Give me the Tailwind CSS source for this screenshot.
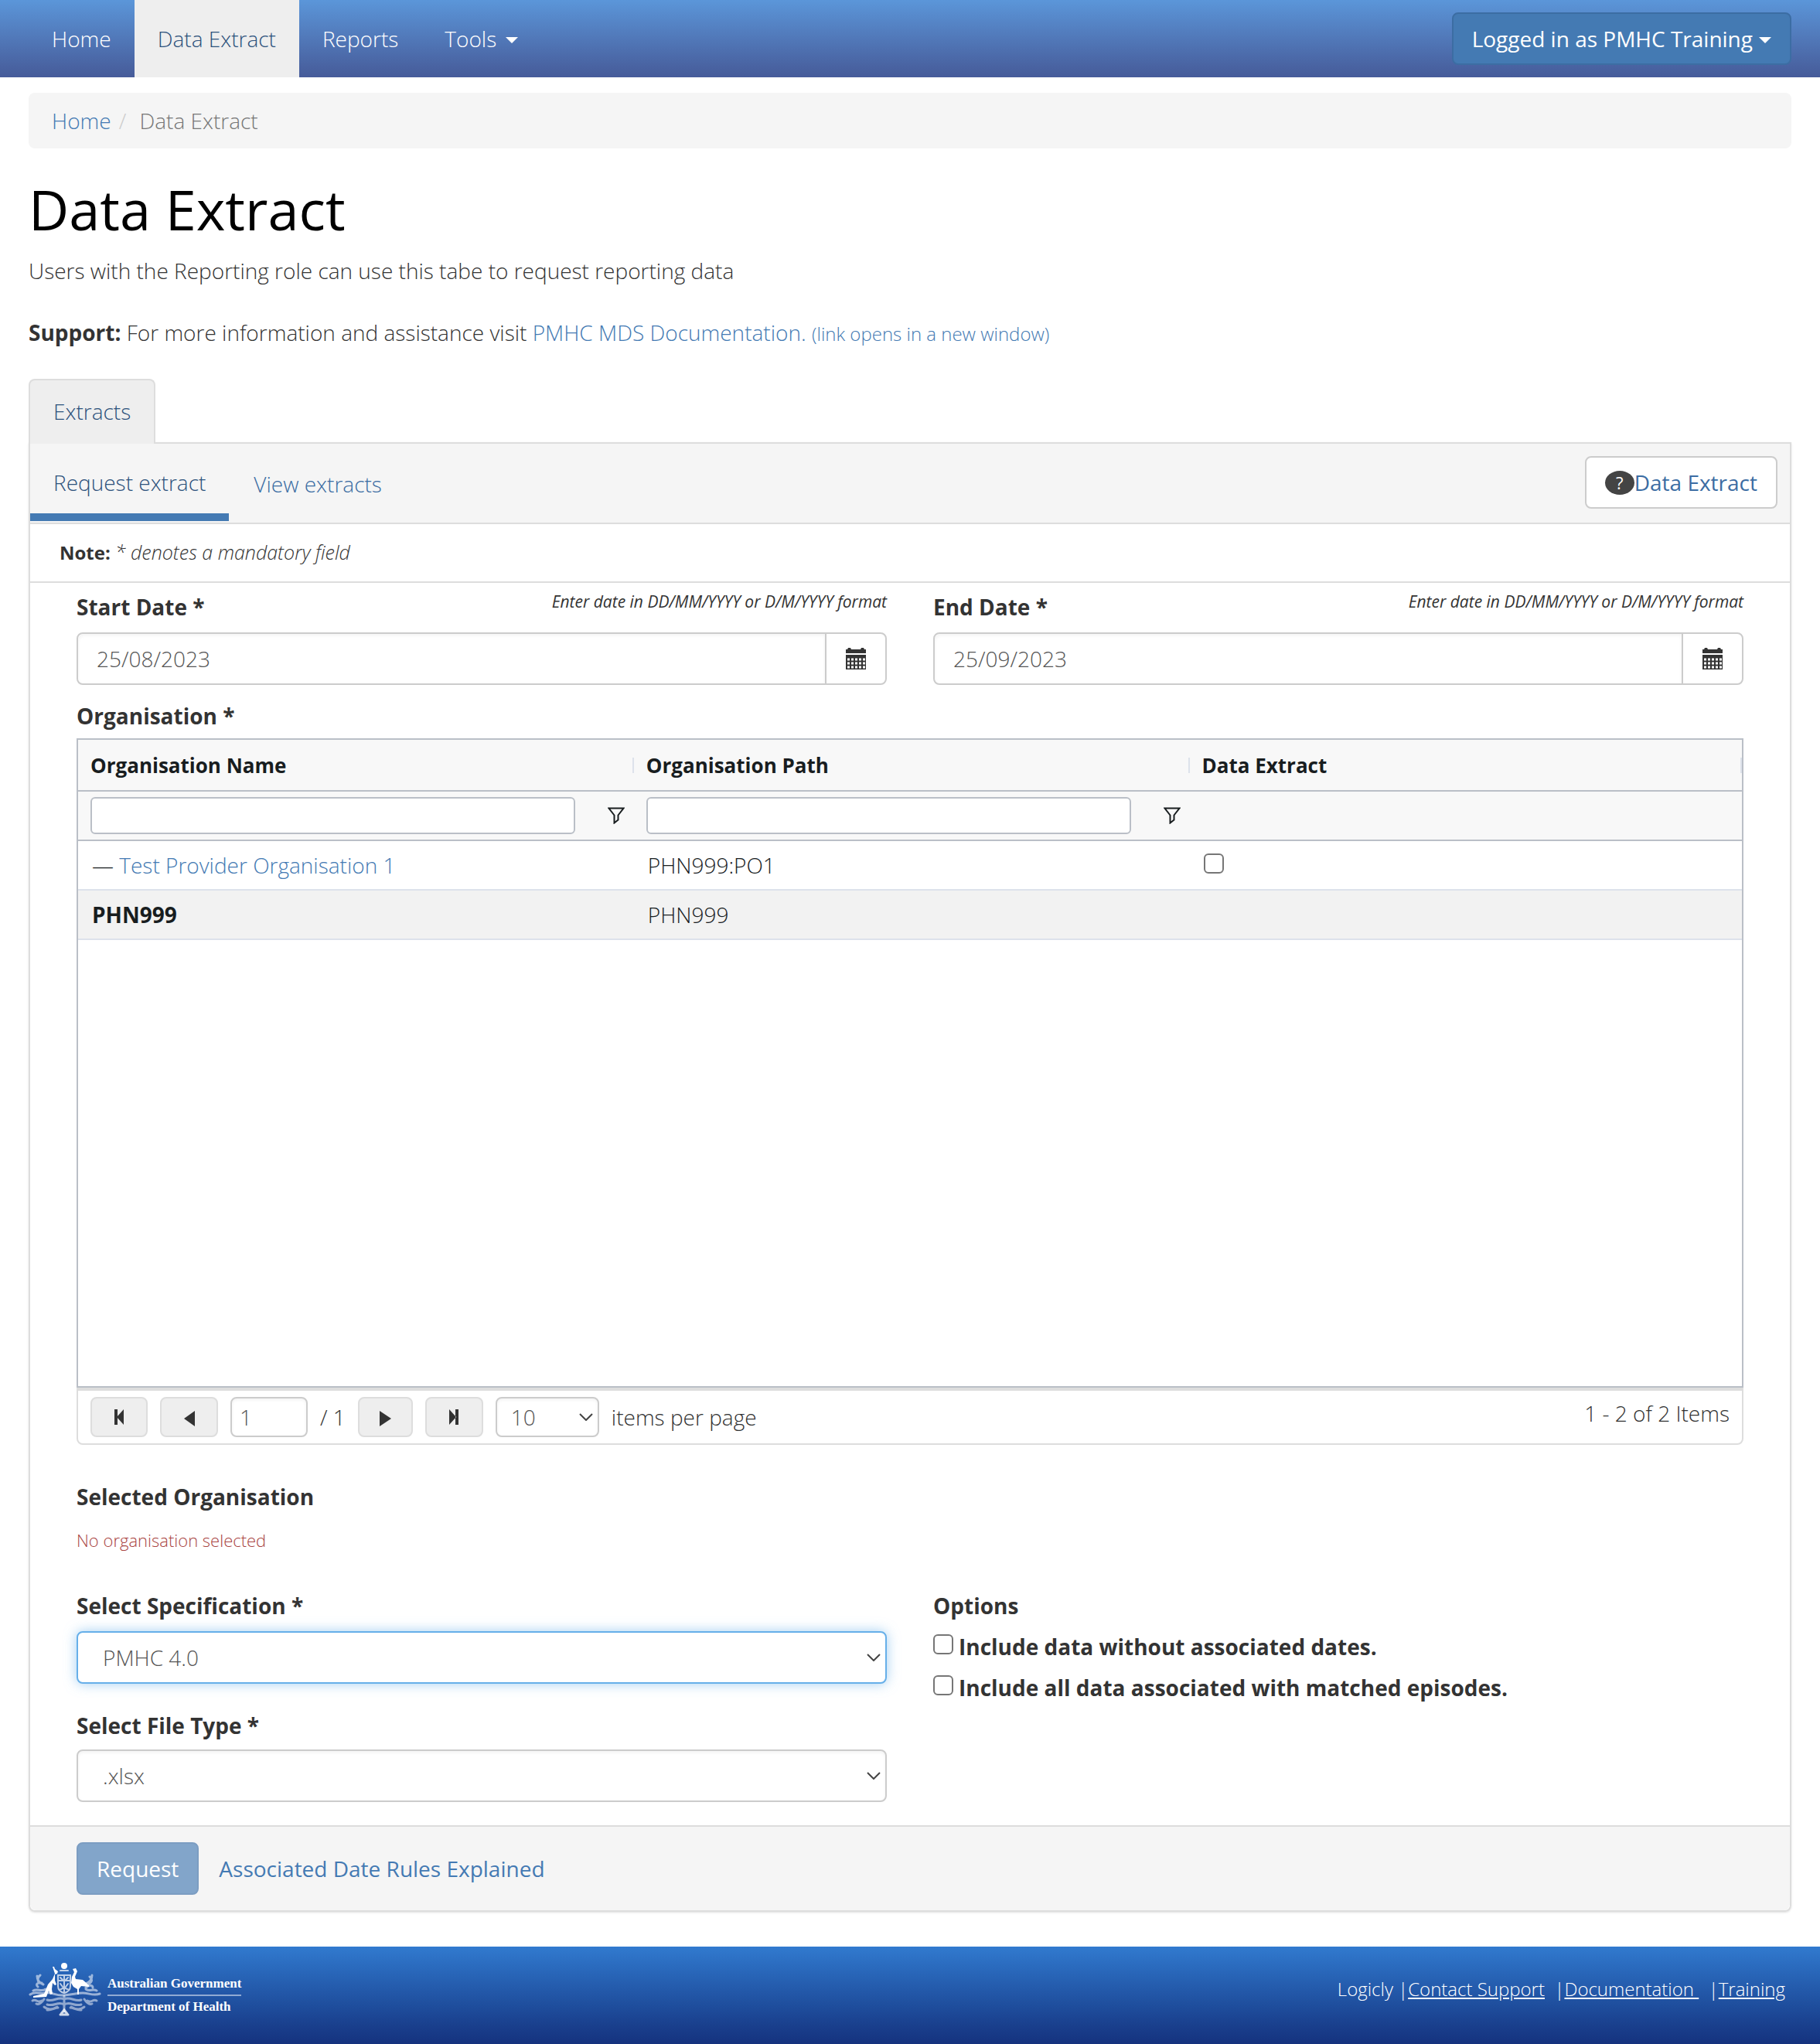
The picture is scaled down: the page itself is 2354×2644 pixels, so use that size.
<!DOCTYPE html>
<html lang="en">
<head>
    <meta charset="UTF-8">
    <meta name="viewport" content="width=device-width, initial-scale=1.0">
    <title>Data Extract - PMHC MDS</title>
    <script src="https://cdn.jsdelivr.net/npm/@tailwindcss/browser@4"></script>
</head>
<body class="bg-white text-[#333] font-['Open_Sans',sans-serif] font-light text-[28px] leading-[40px]">

    <!-- Navigation -->
    <header class="bg-linear-to-b from-[#5b96d9] to-[#465b99] px-[37px] h-[100px] flex items-center justify-between text-white">
        <nav class="h-full">
            <ul class="flex h-full">
                <li><a href="#" class="flex h-full items-center px-[30px]">Home</a></li>
                <li><a href="#" class="flex h-full items-center px-[30px] bg-[#eee] text-[#2d527c]">Data Extract</a></li>
                <li><a href="#" class="flex h-full items-center px-[30px]">Reports</a></li>
                <li><a href="#" class="flex h-full items-center gap-3 px-[30px]">Tools
                    <svg class="w-4 h-2 mt-1" viewBox="0 0 16 8" fill="currentColor"><path d="M0 0h16l-8 8z"/></svg></a></li>
            </ul>
        </nav>
        <button type="button" class="flex items-center gap-2 h-[68px] px-[24px] border-2 border-[#3c6da3] bg-[#447ab3] rounded-lg font-normal">Logged in as PMHC Training
            <svg class="w-4 h-2 mt-1" viewBox="0 0 16 8" fill="currentColor"><path d="M0 0h16l-8 8z"/></svg></button>
    </header>

    <main class="px-[37px] pt-5">
        <!-- Breadcrumb -->
        <ol class="flex bg-[#f5f5f5] rounded-lg px-[30px] py-4 text-[#777]">
            <li><a href="#" class="text-[#447ab3]">Home</a></li>
            <li><span class="text-[#ccc] px-[10px]">/</span> Data Extract</li>
        </ol>

        <h1 class="text-[72px] leading-[80px] font-normal text-black mt-[38px]">Data Extract</h1>
        <p class="mt-5">Users with the Reporting role can use this tabe to request reporting data</p>
        <p class="mt-10"><b class="font-bold">Support:</b> For more information and assistance visit <a href="#" class="text-[#447ab3]">PMHC MDS Documentation. <small class="text-[24px]">(link opens in a new window)</small></a></p>

        <!-- Main tabs -->
        <ul class="flex mt-[38px]">
            <li class="-mb-0.5"><a href="#" class="block h-[84px] px-[30px] pt-5 bg-[#eee] text-[#2d527c] border-2 border-b-0 border-[#ddd] rounded-t-lg">Extracts</a></li>
        </ul>

        <div class="border-2 border-[#ddd] rounded-b-lg shadow-sm">
            <!-- Sub tabs -->
            <div class="flex justify-between bg-[#f5f5f5] border-b-2 border-[#ddd] h-[104px]">
                <ul class="flex gap-0.5">
                    <li><a href="#" class="block h-[100px] px-[30px] pt-[30px] text-[#2d527c] border-b-10 border-[#447ab3]">Request extract</a></li>
                    <li><a href="#" class="block h-[100px] px-[30px] pt-8 text-[#3c6da3]">View extracts</a></li>
                </ul>
                <button type="button" class="flex items-center h-[68px] mt-4 mr-4 px-[24px] bg-white border-2 border-[#ccc] rounded-lg font-normal text-[#3c6da3]">
                    <span class="w-[38px] h-[31px] rounded-[50%] bg-[#444] text-white text-[22px] leading-[31px] text-center">?</span>Data Extract</button>
            </div>
            <p class="border-b-2 border-[#ddd] h-[76px] pl-[38px] text-[24px] leading-[72px]"><b class="font-bold">Note:</b> <i class="text-[25px]">* denotes a mandatory field</i></p>

            <form>
                <div class="px-[60px] pb-[30px]">
                    <div class="grid grid-cols-2 gap-[60px]">
                        <div>
                            <div class="flex justify-between h-16">
                                <label for="startDate" class="font-bold pt-[11px]">Start Date *</label>
                                <i class="font-normal text-[21px] leading-[48px]">Enter date in DD/MM/YYYY or D/M/YYYY format</i>
                            </div>
                            <div class="flex h-[68px] border-2 border-[#ccc] rounded-lg">
                                <input type="text" id="startDate" value="25/08/2023" class="flex-1 min-w-0 px-6 text-[#555] rounded-l-lg inset-shadow-sm">
                                <button type="button" aria-label="Choose start date" class="w-[78px] border-l-2 border-[#ccc] flex justify-center items-center">
                                    <svg class="w-[26px] h-7" viewBox="0 0 26 28"><path fill="#333" d="M0 2h2l1-2h3l1 2h12l1-2h3l1 2h2v5H0zM0 9h26v19H0z"/><path stroke="#fff" stroke-width="3" stroke-dasharray="3 2" d="M2 15h23M2 20h23M2 25h23"/></svg>
                                </button>
                            </div>
                        </div>
                        <div>
                            <div class="flex justify-between h-16">
                                <label for="endDate" class="font-bold pt-[11px]">End Date *</label>
                                <i class="font-normal text-[21px] leading-[48px]">Enter date in DD/MM/YYYY or D/M/YYYY format</i>
                            </div>
                            <div class="flex h-[68px] border-2 border-[#ccc] rounded-lg">
                                <input type="text" id="endDate" value="25/09/2023" class="flex-1 min-w-0 px-6 text-[#555] rounded-l-lg inset-shadow-sm">
                                <button type="button" aria-label="Choose end date" class="w-[78px] border-l-2 border-[#ccc] flex justify-center items-center">
                                    <svg class="w-[26px] h-7" viewBox="0 0 26 28"><path fill="#333" d="M0 2h2l1-2h3l1 2h12l1-2h3l1 2h2v5H0zM0 9h26v19H0z"/><path stroke="#fff" stroke-width="3" stroke-dasharray="3 2" d="M2 15h23M2 20h23M2 25h23"/></svg>
                                </button>
                            </div>
                        </div>
                    </div>

                    <!-- Organisation grid -->
                    <h2 class="font-bold mt-5 mb-[9px]">Organisation *</h2>
                    <div class="border-2 border-[#babfc7] h-[840px]">
                        <table class="w-full table-fixed text-left text-[#181d1f]">
                            <thead class="bg-[#f8f8f8]">
                                <tr class="h-[66px] border-b-2 border-[#babfc7] text-[26px]">
                                    <th class="p-0 w-[33.4%]"><div class="flex items-center justify-between pl-4 font-bold">Organisation Name<span class="w-0.5 h-5 bg-[#dde2eb]"></span></div></th>
                                    <th class="p-0 w-[33.4%]"><div class="flex items-center justify-between pl-4 font-bold">Organisation Path<span class="w-0.5 h-5 bg-[#dde2eb]"></span></div></th>
                                    <th class="p-0"><div class="flex items-center justify-between pl-4 font-bold">Data Extract<span class="w-0.5 h-5 bg-[#dde2eb]"></span></div></th>
                                </tr>
                                <tr class="h-16 border-b-2 border-[#babfc7]">
                                    <td class="p-0"><div class="flex items-center pl-4 pr-3">
                                        <input type="text" aria-label="Filter by organisation name" class="flex-1 min-w-0 h-12 bg-white border-2 border-[#babfc7] rounded-md px-2">
                                        <button type="button" aria-label="Name filter" class="ml-[42px]"><svg class="w-[22px] h-[22px]" viewBox="0 0 22 22" fill="none" stroke="#181d1f" stroke-width="2"><path d="M1.500 1.500h19l-7 9v6l-5 4v-10z"/></svg></button>
                                    </div></td>
                                    <td class="p-0"><div class="flex items-center pl-4 pr-3">
                                        <input type="text" aria-label="Filter by organisation path" class="flex-1 min-w-0 h-12 bg-white border-2 border-[#babfc7] rounded-md px-2">
                                        <button type="button" aria-label="Path filter" class="ml-[42px]"><svg class="w-[22px] h-[22px]" viewBox="0 0 22 22" fill="none" stroke="#181d1f" stroke-width="2"><path d="M1.500 1.500h19l-7 9v6l-5 4v-10z"/></svg></button>
                                    </div></td>
                                    <td></td>
                                </tr>
                            </thead>
                            <tbody>
                                <tr class="h-16 border-b-2 border-[#dde2eb]">
                                    <td class="px-[18px]">— <a href="#" class="text-[#447ab3]">Test Provider Organisation 1</a></td>
                                    <td class="px-[18px]">PHN999:PO1</td>
                                    <td class="px-[18px]"><input type="checkbox" aria-label="Extract Test Provider Organisation 1" class="block mb-1 size-[26px] appearance-none bg-white border-2 border-[#767676] rounded-md"></td>
                                </tr>
                                <tr class="h-16 border-b-2 border-[#dde2eb] bg-[#f2f2f2]">
                                    <td class="px-[18px] font-bold">PHN999</td>
                                    <td class="px-[18px]">PHN999</td>
                                    <td></td>
                                </tr>
                            </tbody>
                        </table>
                    </div>

                    <!-- Pager -->
                    <div class="flex gap-4 border-2 border-t-4 border-[#ddd] rounded-b-lg px-4 py-2 h-[74px]">
                        <button type="button" aria-label="First page" class="w-[74px] h-[52px] bg-[#eee] border-2 border-[#ddd] rounded-lg flex justify-center items-center"><svg class="w-3 h-5" viewBox="0 0 12 20" fill="#333"><path d="M0 0h4v20H0zM12 0v20L3 10z"/></svg></button>
                        <button type="button" aria-label="Previous page" class="w-[75px] h-[52px] bg-[#eee] border-2 border-[#ddd] rounded-lg flex justify-center items-center"><svg class="w-[14px] h-5 mt-1" viewBox="0 0 14 20" fill="#333"><path d="M14 0v20L0 10z"/></svg></button>
                        <input type="text" aria-label="Page" value="1" class="w-[100px] h-[52px] px-[10px] border-2 border-[#ccc] rounded-lg text-[#555] inset-shadow-sm">
                        <span class="leading-[52px]">/ 1</span>
                        <button type="button" aria-label="Next page" class="w-[71px] h-[52px] bg-[#eee] border-2 border-[#ddd] rounded-lg flex justify-center items-center"><svg class="w-[15px] h-5 mt-1" viewBox="0 0 15 20" fill="#333"><path d="M0 0v20l15-10z"/></svg></button>
                        <button type="button" aria-label="Last page" class="w-[75px] h-[52px] bg-[#eee] border-2 border-[#ddd] rounded-lg flex justify-center items-center"><svg class="w-3 h-5" viewBox="0 0 12 20" fill="#333"><path d="M8 0h4v20H8zM0 0v20l9-10z"/></svg></button>
                        <div class="grid w-[134px] h-[52px]">
                            <select id="pageSize" class="col-start-1 row-start-1 appearance-none px-[18px] border-2 border-[#ccc] rounded-lg text-[#555] bg-white inset-shadow-sm"><option>10</option></select>
                            <svg class="col-start-1 row-start-1 justify-self-end self-center mr-2 w-[18px] h-[10px] pointer-events-none" viewBox="0 0 18 10" fill="none" stroke="#444" stroke-width="2"><path d="M1 1l8 8 8-8"/></svg>
                        </div>
                        <label for="pageSize" class="leading-[52px]">items per page</label>
                        <span class="ml-auto leading-[42px]">1 - 2 of 2 Items</span>
                    </div>

                    <h2 class="font-bold mt-[47px]">Selected Organisation</h2>
                    <p class="mt-4 text-[22px] text-[#a94442]">No organisation selected</p>

                    <!-- Specification and options -->
                    <div class="grid grid-cols-2 gap-[60px] mt-[45px]">
                        <div>
                            <label for="specification" class="block font-bold">Select Specification *</label>
                            <div class="grid h-[68px] mt-[13px]">
                                <select id="specification" class="col-start-1 row-start-1 appearance-none px-8 border-2 border-[#66afe9] rounded-lg text-[#555] bg-white shadow-[0_0_16px_#66afe999]"><option>PMHC 4.0</option></select>
                                <svg class="col-start-1 row-start-1 justify-self-end self-center mr-2 w-[18px] h-[10px] pointer-events-none" viewBox="0 0 18 10" fill="none" stroke="#444" stroke-width="2"><path d="M1 1l8 8 8-8"/></svg>
                            </div>
                            <label for="fileType" class="block font-bold mt-[34px]">Select File Type *</label>
                            <div class="grid h-[68px] mt-[11px]">
                                <select id="fileType" class="col-start-1 row-start-1 appearance-none px-8 border-2 border-[#ccc] rounded-lg text-[#555] bg-white inset-shadow-sm"><option>.xlsx</option></select>
                                <svg class="col-start-1 row-start-1 justify-self-end self-center mr-2 w-[18px] h-[10px] pointer-events-none" viewBox="0 0 18 10" fill="none" stroke="#444" stroke-width="2"><path d="M1 1l8 8 8-8"/></svg>
                            </div>
                        </div>
                        <fieldset class="font-bold">
                            <legend>Options</legend>
                            <label class="flex gap-[7px] mt-[13px]"><input type="checkbox" class="mt-1 size-[26px] appearance-none bg-white border-2 border-[#767676] rounded-md">Include data without associated dates.</label>
                            <label class="flex gap-[7px] mt-[13px]"><input type="checkbox" class="mt-1 size-[26px] appearance-none bg-white border-2 border-[#767676] rounded-md">Include all data associated with matched episodes.</label>
                        </fieldset>
                    </div>
                </div>

                <div class="flex items-center gap-[26px] bg-[#f5f5f5] border-t-2 border-[#ddd] rounded-b-lg px-[60px] py-5 font-normal">
                    <button type="submit" class="h-[68px] px-6 bg-[#82a5ca] border-2 border-[#7c9dc2] text-white rounded-lg">Request</button>
                    <a href="#" class="text-[#447ab3]">Associated Date Rules Explained</a>
                </div>
            </form>
        </div>
    </main>

    <!-- Footer -->
    <footer class="flex items-center justify-between mt-[45px] px-[37px] pb-4 h-[126px] bg-linear-to-b from-[#317acf] to-[#15327e] text-white">
        <div class="flex gap-2">
            <svg class="w-[94px] h-[70px]" viewBox="0 0 94 70" fill="none" stroke="#fff" stroke-linecap="round">
                <circle cx="46" cy="5" r="4" fill="#fff" stroke="none"/>
                <path stroke-width="2" opacity=".7" d="M41 11h10"/>
                <path fill="#fff" stroke="none" d="M31 6l2 0 1 3 4 3-1 3-3 1 0 8 2 5-2 1-3-3-1 8 1 6-3 1-2-5-3 8-17 1v-2l14-3 5-12 6-7 3-7z"/>
                <path fill="#fff" stroke="none" d="M57 9l4-1 2 4-3 7 1 3 9 1 8 7v2l-10-1-3 4v7h-2v-7l-5-3-3-5 1-8 3-6-1-2z"/>
                <path stroke-width="2" opacity=".7" d="M38 17h16v14c0 5-4 8-8 9-4-1-8-4-8-9zM38 24h16M46 17v23M41 20l3 3M51 20l-3 3M41 28l3 4M51 28l-3 4M40 36l6-3 6 3"/>
                <path stroke-width="3" opacity=".55" d="M11 18c0 6 3 9 8 11M15 17c-4 3-4 8 0 10M17 27c-6-1-8 2-5 5M82 17c0 6-3 9-8 11M79 19c4 3 3 7-1 9M74 33c5-4 9-3 9 0M2 42c6-5 12 0 20-2s12 4 24 3 16-3 24-3 14 4 22 1M6 37c5-3 11 2 16-2M88 37c-5-3-9 2-14-2"/>
                <path stroke-width="3" opacity=".5" d="M46 44v20M46 48c-8-4-14 4-22 1M46 48c8-4 14 4 22 1M46 55c-8-5-13 3-22 0M46 55c8-5 13 3 22 0M5 50c5-3 7 4 12 0M10 54c4 2 8-3 10-6M88 50c-5-3-7 4-12 0M82 54c-4 2-8-3-10-6M20 58c6 5 12 3 17 0M72 58c-6 5-12 3-17 0M24 62c5 1 10-3 14-3M68 62c-5 1-10-3-14-3"/>
                <path stroke-width="3" opacity=".8" d="M42 67l4-5 4 5M41 68h10"/>
            </svg>
            <div class="font-['Liberation_Serif',serif] font-bold text-[17px] leading-6 pt-4">
                <div class="border-b-2 border-white/50 pb-0.5">Australian Government</div>
                <div class="pt-0.5">Department of Health</div>
            </div>
        </div>
        <p class="mr-2 text-[24px] whitespace-pre">Logicly |<a href="#" class="underline">Contact Support</a>  |<a href="#" class="underline">Documentation </a>  |<a href="#" class="underline">Training</a></p>
    </footer>

</body>
</html>
